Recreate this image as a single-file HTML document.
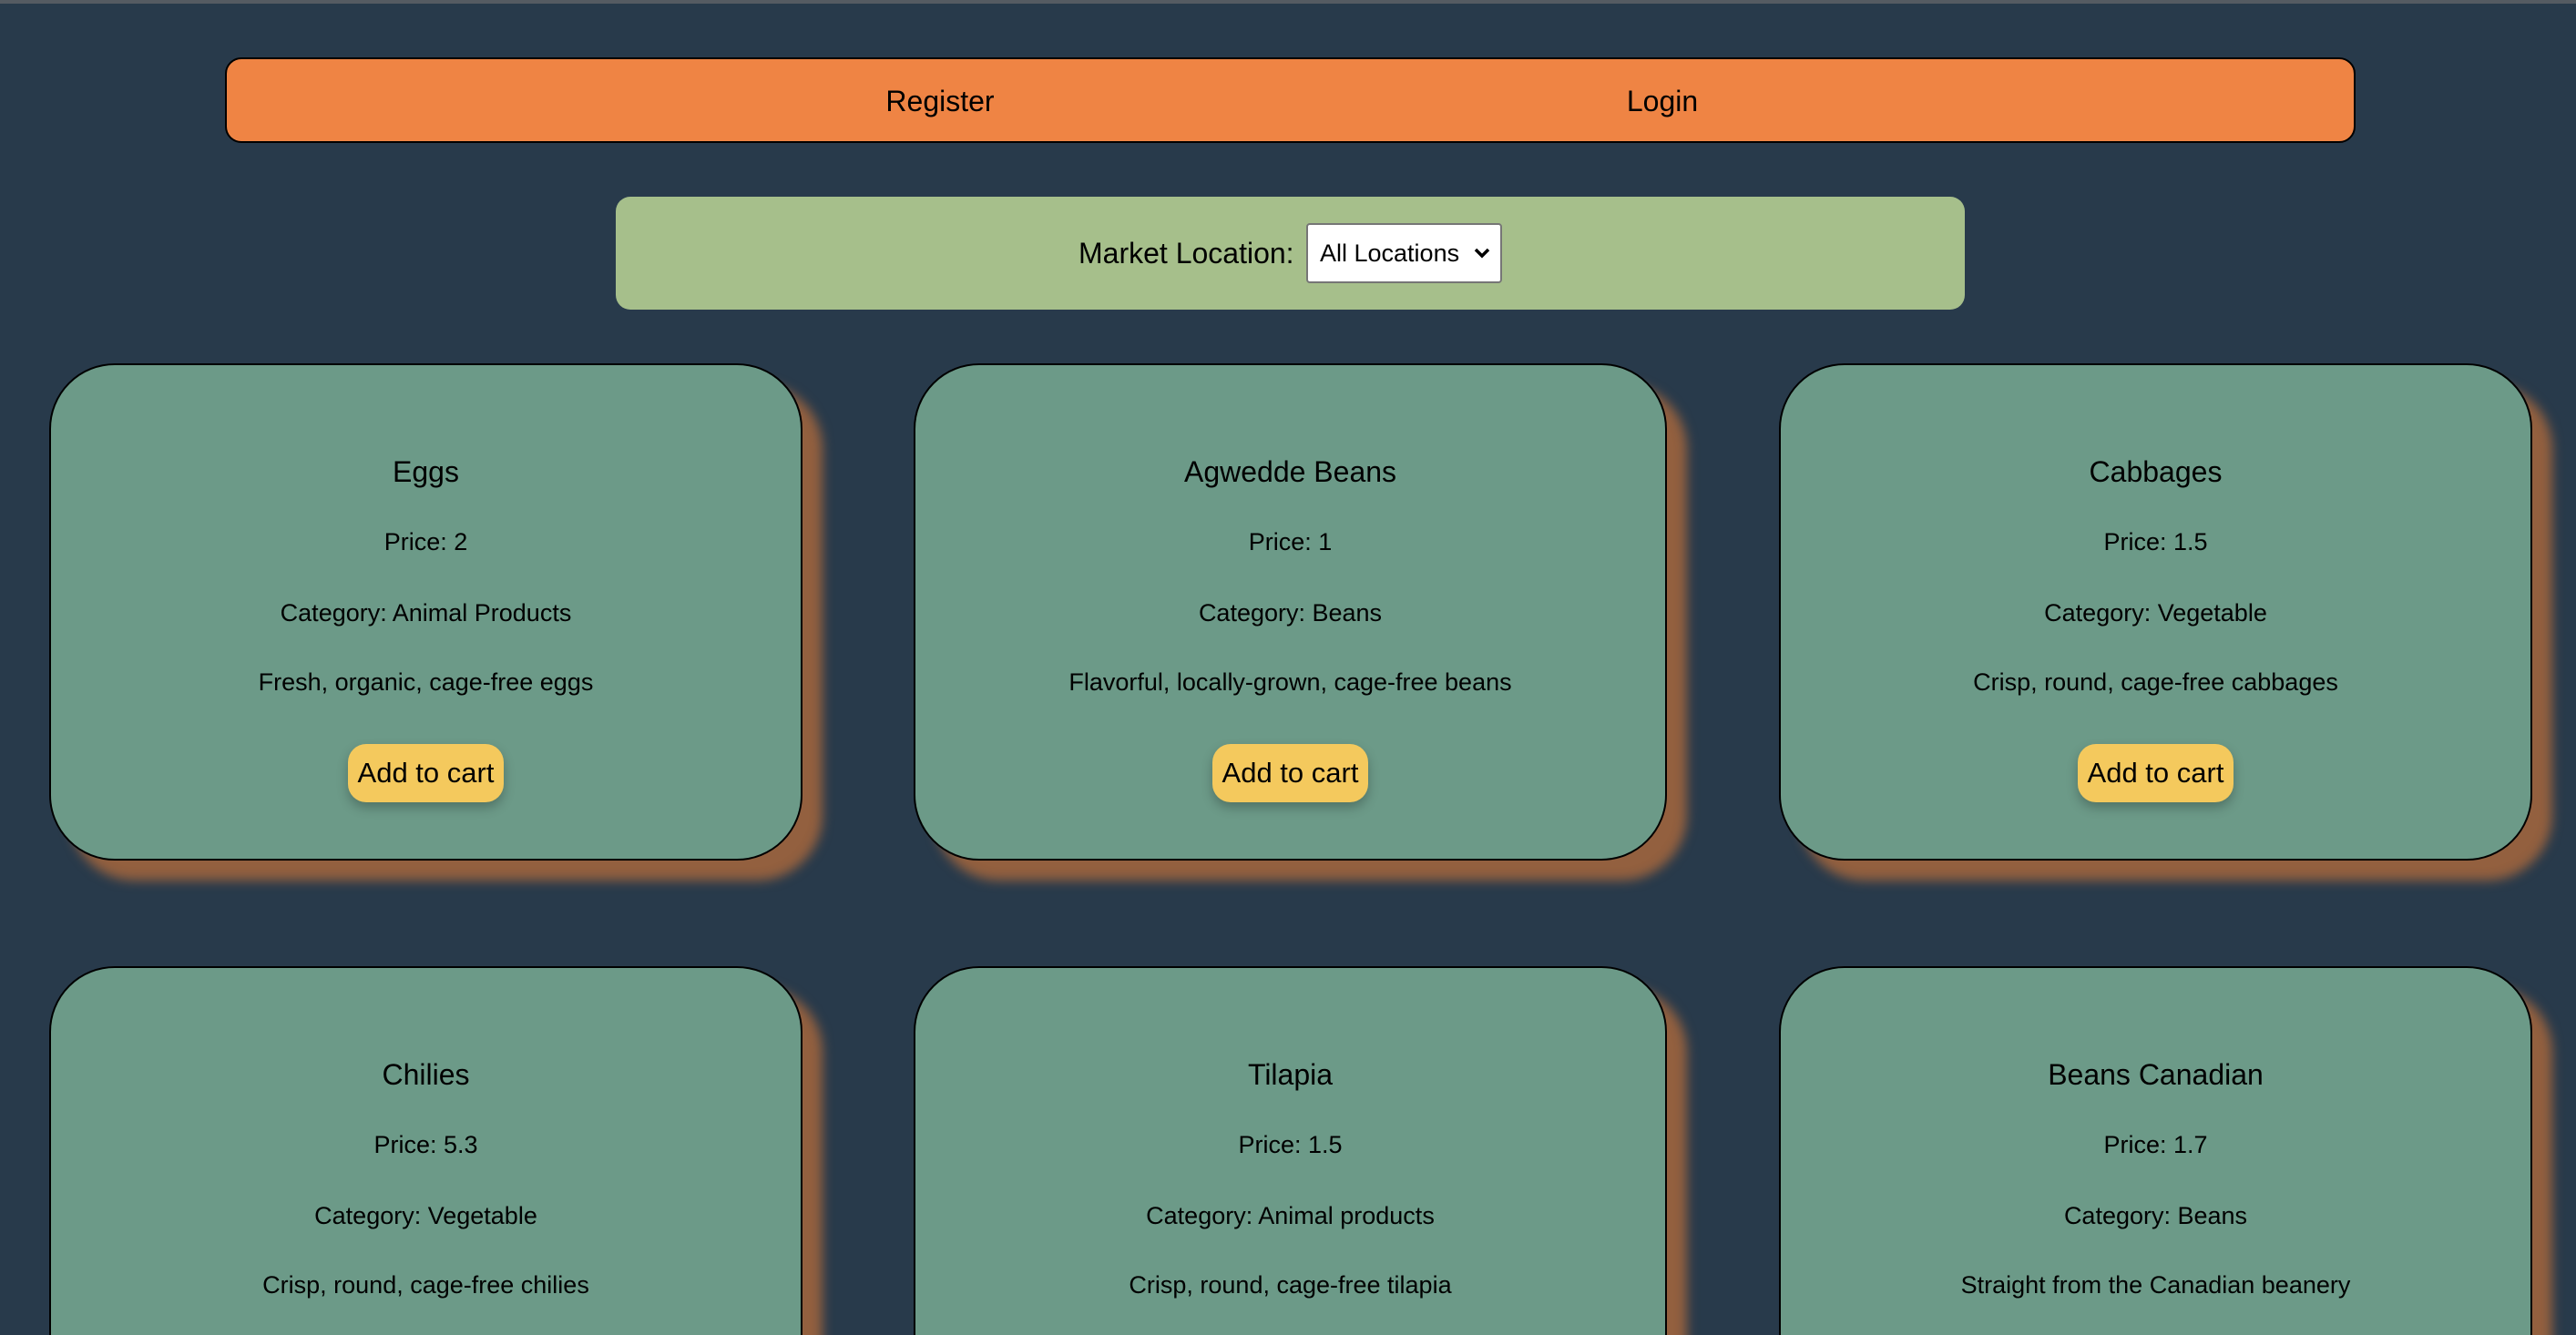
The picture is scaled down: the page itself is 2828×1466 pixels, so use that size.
<!DOCTYPE html>
<html><head><meta charset="utf-8"><style>
*{box-sizing:border-box;margin:0;padding:0}
html,body{width:2828px;height:1466px;overflow:hidden;background:#283a4b;font-family:"Liberation Sans",sans-serif;color:#000}
.wrap{position:relative;width:2828px;height:1466px;overflow:hidden}
.topline{position:absolute;left:0;top:0;width:2828px;height:4px;background:#555b62}
.nav{position:absolute;left:247px;top:63px;width:2339px;height:94px;background:#ef8444;border:2px solid #000;border-radius:18px}
.nav span{position:absolute;top:0;line-height:92px;font-size:32px;transform:translateX(-50%)}
.loc{position:absolute;left:676px;top:216px;width:1481px;height:124px;background:#a6bf8b;border-radius:16px}
.loc .lbl{position:absolute;left:508px;top:0;line-height:124px;font-size:32px}
.sel{position:absolute;left:758px;top:29px;width:215px;height:66px;background:#fff;border:2px solid #767676;border-radius:4px;font-size:27px;line-height:62px;padding-left:13px}
.sel svg{position:absolute;right:10px;top:24px}
.card{position:absolute;width:827px;height:546px;background:#6c9a88;border:2px solid #000;border-radius:72px;box-shadow:22px 22px 12px #93603f;text-align:center}
.card h3{position:absolute;left:0;right:0;top:99px;font-weight:normal;font-size:32px}
.card p{position:absolute;left:0;right:0;font-size:27px}
.btn{position:absolute;left:326px;top:416px;width:171px;height:64px;background:#f4c95d;border-radius:20px;font-size:31px;line-height:64px;box-shadow:0 6px 12px rgba(0,0,0,.25)}
</style></head><body><div class="wrap">
<div class="topline"></div>
<div class="nav"><span style="left:783px">Register</span><span style="left:1576px">Login</span></div>
<div class="loc"><div class="lbl">Market Location:</div><div class="sel">All Locations<svg width="20" height="14" viewBox="0 0 20 14"><path d="M3 3 L10 10 L17 3" stroke="#000" stroke-width="3.5" fill="none"/></svg></div></div>

<div class="card" style="left:54px;top:399px"><h3>Eggs</h3><p style="top:179px">Price: 2</p><p style="top:257px">Category: Animal Products</p><p style="top:333px">Fresh, organic, cage-free eggs</p><div class="btn">Add to cart</div></div>
<div class="card" style="left:1003px;top:399px"><h3>Agwedde Beans</h3><p style="top:179px">Price: 1</p><p style="top:257px">Category: Beans</p><p style="top:333px">Flavorful, locally-grown, cage-free beans</p><div class="btn">Add to cart</div></div>
<div class="card" style="left:1953px;top:399px"><h3>Cabbages</h3><p style="top:179px">Price: 1.5</p><p style="top:257px">Category: Vegetable</p><p style="top:333px">Crisp, round, cage-free cabbages</p><div class="btn">Add to cart</div></div>

<div class="card" style="left:54px;top:1061px"><h3>Chilies</h3><p style="top:179px">Price: 5.3</p><p style="top:257px">Category: Vegetable</p><p style="top:333px">Crisp, round, cage-free chilies</p><div class="btn">Add to cart</div></div>
<div class="card" style="left:1003px;top:1061px"><h3>Tilapia</h3><p style="top:179px">Price: 1.5</p><p style="top:257px">Category: Animal products</p><p style="top:333px">Crisp, round, cage-free tilapia</p><div class="btn">Add to cart</div></div>
<div class="card" style="left:1953px;top:1061px"><h3>Beans Canadian</h3><p style="top:179px">Price: 1.7</p><p style="top:257px">Category: Beans</p><p style="top:333px">Straight from the Canadian beanery</p><div class="btn">Add to cart</div></div>
</div></body></html>
